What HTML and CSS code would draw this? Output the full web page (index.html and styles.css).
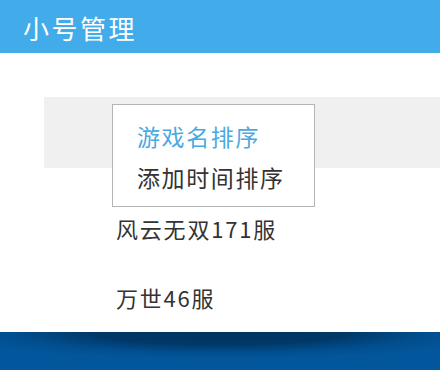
FILE: index.html
```html
<!DOCTYPE html>
<html lang="zh-CN">
<head>
<meta charset="utf-8">
<title>小号管理</title>
<link rel="stylesheet" href="styles.css">
</head>
<body>
<div class="page">
  <header class="topbar">
    <h1 class="title">小号管理</h1>
  </header>
  <main class="content">
    <div class="sortbar">
      <ul class="dropdown">
        <li class="option active">游戏名排序</li>
        <li class="option">添加时间排序</li>
      </ul>
    </div>
    <ul class="list">
      <li class="item">风云无双171服</li>
      <li class="item">万世46服</li>
    </ul>
  </main>
  <footer class="bottombar"></footer>
</div>
</body>
</html>
```
FILE: styles.css
```css
* { box-sizing: border-box; }
html, body { margin: 0; padding: 0; }
body {
  font-family: "Noto Sans CJK SC", "Noto Sans", sans-serif;
  background: #ffffff;
  color: #333333;
}
.page {
  width: 440px;
  height: 370px;
  display: flex;
  flex-direction: column;
  overflow: hidden;
}
.topbar {
  height: 53px;
  flex: none;
  background: #42acea;
  display: flex;
  align-items: center;
  padding-left: 23px;
}
.title {
  margin: 0;
  font-size: 26px;
  font-weight: normal;
  color: #ffffff;
  letter-spacing: 2.5px;
  line-height: 1;
  padding-top: 2px;
}
.content {
  flex: 1;
  padding-top: 44px;
}
.sortbar {
  position: relative;
  margin-left: 44px;
  height: 71px;
  background: #f0f0f0;
}
.dropdown {
  position: absolute;
  left: 68px;
  top: 7px;
  width: 203px;
  height: 103px;
  margin: 0;
  padding: 11px 0 0 24px;
  list-style: none;
  background: #ffffff;
  border: 1px solid #b4b4b4;
  z-index: 2;
}
.option {
  font-size: 23px;
  line-height: 41px;
  letter-spacing: 1.6px;
  color: #333333;
  white-space: nowrap;
}
.option.active { color: #4aa9e2; }
.list {
  margin: 0;
  padding: 26px 0 0 116px;
  list-style: none;
}
.item {
  font-size: 22px;
  line-height: 69px;
  height: 69px;
  letter-spacing: 1.8px;
  color: #333333;
  white-space: nowrap;
}
.bottombar {
  height: 38px;
  flex: none;
  background:
    radial-gradient(ellipse 62% 72% at 50% 0%, rgba(0, 52, 96, 1) 0%, rgba(0, 54, 100, 0.95) 45%, rgba(1, 70, 128, 0.5) 75%, rgba(1, 85, 154, 0) 100%),
    #02569b;
}
```
